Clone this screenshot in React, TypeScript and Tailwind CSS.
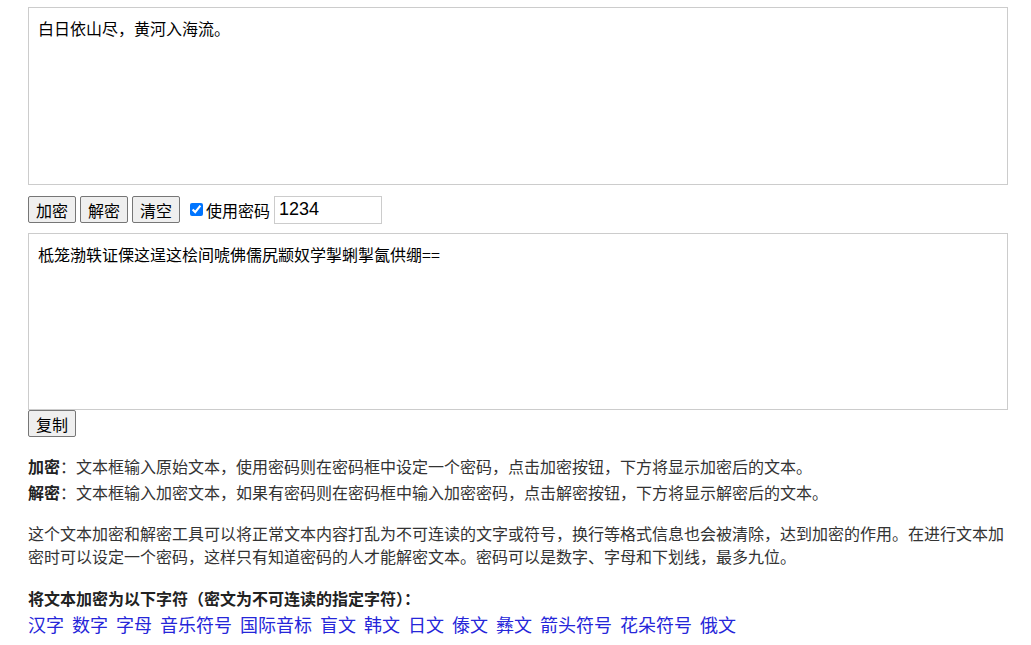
import React, { useState } from 'react';

const cjk = "font-['Microsoft_YaHei','Noto_Sans_CJK_SC',sans-serif]";

const links = ['汉字', '数字', '字母', '音乐符号', '国际音标', '盲文', '韩文', '日文', '傣文', '彝文', '箭头符号', '花朵符号', '俄文'];

const Btn = ({ children }: { children: React.ReactNode }) => (
  <button
    type="button"
    className={`h-[27px] w-[48px] px-0 bg-[#efefef] border border-[#767676] rounded-[2px] text-[16px] leading-none text-black ${cjk} hover:bg-[#e5e5e5]`}
  >
    {children}
  </button>
);

const App = () => {
  const [plain, setPlain] = useState<string>('白日依山尽，黄河入海流。');
  const [cipher, setCipher] = useState<string>('柢笼渤轶证傈这逞这桧间唬佛儒尻颛奴学掣蜊掣氤供绷==');
  const [usePwd, setUsePwd] = useState<boolean>(true);
  const [pwd, setPwd] = useState<string>('1234');

  return (
    <div className={`bg-white min-h-[645px] pt-[7px] pl-[28px] text-[#333] ${cjk}`}>
      <div className="w-[980px] flex flex-col">
        {/* source text */}
        <textarea
          value={plain}
          onChange={(e) => setPlain(e.target.value)}
          className={`block w-[980px] h-[178px] border border-[#cccccc] px-[9px] py-[10px] text-[16px] leading-[20px] text-black resize-none outline-none ${cjk}`}
        />

        {/* controls */}
        <div className="flex items-center h-[27px] mt-[11px] mb-[10px]">
          <div className="flex gap-[4px]">
            <Btn>加密</Btn>
            <Btn>解密</Btn>
            <Btn>清空</Btn>
          </div>
          <label className="flex items-center ml-[10px] text-[16px] text-black">
            <input
              type="checkbox"
              checked={usePwd}
              onChange={(e) => setUsePwd(e.target.checked)}
              className="w-[13px] h-[13px] m-0 mr-[3px] accent-[#0075ff]"
            />
            使用密码
          </label>
          <input
            type="text"
            value={pwd}
            onChange={(e) => setPwd(e.target.value)}
            className="ml-[4px] w-[108px] h-[28px] border border-[#cccccc] px-[4px] text-[18px] text-black font-['Liberation_Sans',Arial,sans-serif] outline-none"
          />
        </div>

        {/* result text */}
        <textarea
          value={cipher}
          onChange={(e) => setCipher(e.target.value)}
          className={`block w-[980px] h-[177px] border border-[#cccccc] px-[9px] py-[10px] text-[16px] leading-[20px] text-black resize-none outline-none ${cjk}`}
        />
        <div className="flex">
          <Btn>复制</Btn>
        </div>

        {/* help */}
        <div className="mt-[16px] text-[16px] leading-[26px]">
          <div>
            <b className="text-[#222]">加密</b>：文本框输入原始文本，使用密码则在密码框中设定一个密码，点击加密按钮，下方将显示加密后的文本。
          </div>
          <div>
            <b className="text-[#222]">解密</b>：文本框输入加密文本，如果有密码则在密码框中输入加密密码，点击解密按钮，下方将显示解密后的文本。
          </div>
        </div>

        <p className="mt-[17px] text-[16px] leading-[22.5px]">
          这个文本加密和解密工具可以将正常文本内容打乱为不可连读的文字或符号，换行等格式信息也会被清除，达到加密的作用。在进行文本加密时可以设定一个密码，这样只有知道密码的人才能解密文本。密码可以是数字、字母和下划线，最多九位。
        </p>

        <div className="mt-[18px] leading-[26px]">
          <div className="text-[16px] font-bold text-[#222]">将文本加密为以下字符（密文为不可连读的指定字符）：</div>
          <div className="flex flex-wrap gap-x-[8px] text-[18px]">
            {links.map((l) => (
              <a key={l} href="#" className="text-[#2626d9] no-underline hover:underline">
                {l}
              </a>
            ))}
          </div>
        </div>
      </div>
    </div>
  );
};

export default App;
